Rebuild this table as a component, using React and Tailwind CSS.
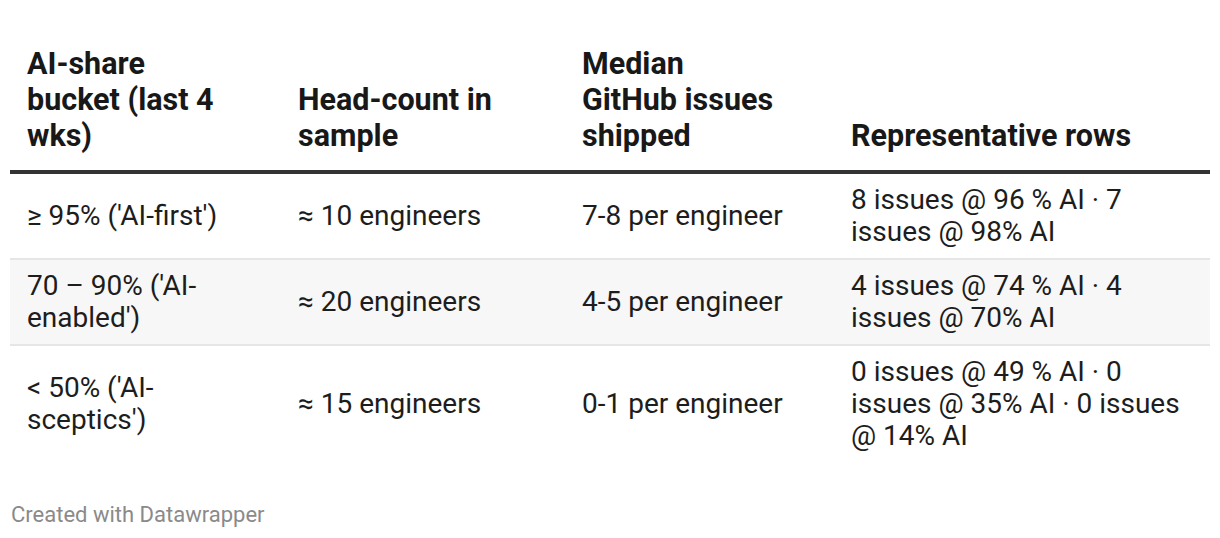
import React from 'react';

const headers = [
  'AI-share bucket (last 4 wks)',
  'Head-count in sample',
  'Median GitHub issues shipped',
  'Representative rows',
];

const rows = [
  ["≥ 95% ('AI-first')", '≈ 10 engineers', '7-8 per engineer', '8 issues @ 96 % AI · 7 issues @ 98% AI'],
  ["70 – 90% ('AI-enabled')", '≈ 20 engineers', '4-5 per engineer', '4 issues @ 74 % AI · 4 issues @ 70% AI'],
  ["< 50% ('AI-sceptics')", '≈ 15 engineers', '0-1 per engineer', '0 issues @ 49 % AI · 0 issues @ 35% AI · 0 issues @ 14% AI'],
];

const cols = 'grid grid-cols-[271px_284px_269px_376px]';
// right padding per column keeps the wrapping of the original
const pads = ['pr-[54px]', 'pr-[37px]', 'pr-[48px]', 'pr-[19px]'];

const App = () => {
  return (
    <div className="w-[1220px] h-[538px] bg-white text-[#1d1d1d] font-['Roboto',sans-serif]">
      <div className="pt-[46px] px-[10px]">
        {/* Header */}
        <div className={`${cols} items-end pb-[16px] border-b-4 border-[#333333]`}>
          {headers.map((h, i) => (
            <div key={i} className={`pl-[17px] ${pads[i]} text-[30.5px] leading-[36px] font-bold text-[#181818]`}>
              {h}
            </div>
          ))}
        </div>

        {/* Body rows */}
        {rows.map((r, ri) => (
          <div
            key={ri}
            className={`${cols} items-center py-[10px] ${ri < rows.length - 1 ? 'border-b-2 border-[#e6e6e6]' : ''} ${ri === 1 ? 'bg-[#f7f7f7]' : ''}`}
          >
            {r.map((c, ci) => (
              <div key={ci} className={`pl-[17px] ${pads[ci]} text-[28px] leading-[32px]`}>
                {c}
              </div>
            ))}
          </div>
        ))}
      </div>

      {/* Footer */}
      <div className="mt-[40px] pl-[11px] text-[22px] leading-[26px] text-[#8a8a8a]">
        Created with Datawrapper
      </div>
    </div>
  );
};

export default App;
